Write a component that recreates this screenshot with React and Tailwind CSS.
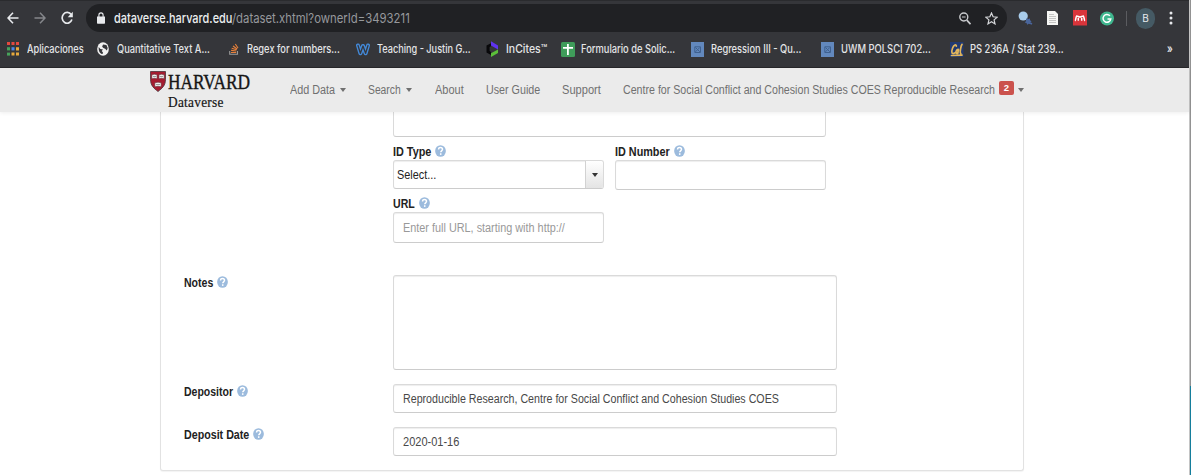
import React, { useLayoutEffect, useRef, useState } from "react";

// Text that is squeezed horizontally to fill exactly `w` pixels.
function Fit({ w, className = "", children }) {
  const ref = useRef(null);
  const [scale, setScale] = useState(1);
  useLayoutEffect(() => {
    setScale(w / ref.current.offsetWidth);
  }, [w]);
  return (
    <span className="flex shrink-0 items-center" style={{ width: w }}>
      <span
        ref={ref}
        className={"block shrink-0 origin-left whitespace-nowrap " + className}
        style={{ transform: `scaleX(${scale})` }}
      >
        {children}
      </span>
    </span>
  );
}

const Caret = ({ className = "" }) => (
  <svg className={"h-[4px] w-[6px] shrink-0 " + className} viewBox="0 0 6 4" fill="currentColor">
    <path d="M0 0h6L3 4z" />
  </svg>
);

const Help = () => (
  <svg className="relative -top-px ml-1 h-3 w-[11px] shrink-0" viewBox="0 0 16 16" preserveAspectRatio="none">
    <circle cx="8" cy="8" r="7.8" fill="#9cbbdd" />
    <path d="M5.2 6C5.2 4 6.3 3.3 8 3.3s2.9.8 2.9 2.4c0 2-2.5 2-2.5 3.9" fill="none" stroke="#fff" strokeWidth="2.2" />
    <path d="M7.2 11h2.2v2.2H7.2z" fill="#fff" />
  </svg>
);

const Label = ({ w, children }) => (
  <div className="flex h-4 items-center">
    <Fit w={w} className="text-[12px] leading-4 font-bold text-[#222]">{children}</Fit>
    <Help />
  </div>
);

const Box = ({ className = "", children }) => (
  <div className={"flex items-center rounded-[3px] border border-[#dadada] border-b-[#cccccc] bg-white shadow-[inset_0_1px_1px_rgba(0,0,0,0.07)] " + className}>
    {children}
  </div>
);

const Globe = () => (
  <svg className="h-[14px] w-3" viewBox="0 0 14 14" preserveAspectRatio="none">
    <circle cx="7" cy="7" r="6.8" fill="#f1f1f1" />
    <path d="M2 5l2 2 3 .5L5.5 9 7 10.5 6.5 12C4 12 1.5 9.5 2 5zM7 2.5l4 .5 1.5 3-1 2.5-2-1.7L7.5 6 6 4.8z" fill="#35363a" />
  </svg>
);

const Stack = () => (
  <svg className="h-3 w-[10px]" viewBox="0 0 10 12" fill="none">
    <path d="M.7 8v3.3h7.8V8" stroke="#9a9a9a" strokeWidth="1.1" />
    <path d="M2 9.5h5.2M2.1 7.4l5.2.6M2.7 5.2l4.9 1.6M4 3l4.2 3M6.3 1l2.7 4" stroke="#e8803a" strokeWidth="1.1" />
  </svg>
);

const Weebly = () => (
  <svg className="h-[13px] w-[14px]" viewBox="0 0 14 13" fill="none" strokeLinejoin="round" strokeLinecap="round">
    <path d="M2 2.5l2.4 7.8L7 3l2.6 7.3L12 2.5" stroke="#4389d8" strokeWidth="4" />
    <path d="M2 2.5l2.4 7.8L7 3l2.6 7.3L12 2.5" stroke="#35363a" strokeWidth="1.3" />
  </svg>
);

const InCites = () => (
  <svg className="h-4 w-[13px]" viewBox="0 0 13 16">
    <path d="M5 2.2v3L3.6 6v4L5 11v3L.5 11.5v-7z" fill="#08080a" />
    <path d="M5 .3l7 4.2v4L5 4.5z" fill="#5f33f0" />
    <path d="M12 8.5v3.4L5 15.9v-3.6z" fill="#5bbf3a" />
  </svg>
);

const Sheet = () => (
  <svg className="h-[15px] w-[14px]" viewBox="0 0 14 15">
    <rect width="14" height="15" rx="1.5" fill="#3f9c5a" />
    <path d="M6.9 2v11M2 5.8h10" stroke="#fff" strokeWidth="1.8" />
  </svg>
);

const BlueDoc = () => (
  <svg className="h-[15px] w-[13px]" viewBox="0 0 13 15">
    <rect width="13" height="15" fill="#6288bd" />
    <path d="M3.8 4.8h5.7v5.7H3.8zM4.5 5.5l4.3 4.3M8.8 5.5L4.5 9.8" fill="none" stroke="#3f618f" strokeWidth="1" />
  </svg>
);

const Cal = () => (
  <svg className="h-[15px] w-[14px]" viewBox="0 0 14 15" fill="none" strokeLinecap="round">
    <path d="M0 0h13.500v15H0z" fill="#223a72" />
    <path d="M6.300 4.200C6.500 2 3.800 2.600 2.500 6.200 1 10.500 2 12.500 4.600 11M8.200 7.300c-2-.3-3 4-1.600 4.100 1.200 0 1.900-4 1.900-4l-.7 4M12 2.300c-1 1-2.500 8.500-1.200 9.200M1.500 13.500l10.500-.4" stroke="#e3b75c" strokeWidth="1.700" />
  </svg>
);

const Apps = () => (
  <svg className="h-[14px] w-3" viewBox="0 0 12 14">
    <path d="M0 0h3v3H0zM4.5 0h3v3h-3zM9 0h3v3H9z" fill="#e5493f" />
    <path d="M0 5.2h3v3.2H0z" fill="#47a35b" />
    <path d="M4.5 5.2h3v3.2h-3z" fill="#4a86e8" />
    <path d="M9 5.2h3v3.2H9zM4.5 10.6h3v3h-3zM9 10.6h3v3H9z" fill="#e7a93c" />
    <path d="M0 10.6h3v3H0z" fill="#47a35b" />
  </svg>
);

const Mark = ({ w, slot, icon, children }) => (
  <div className={"flex shrink-0 items-center " + slot}>
    <span className="flex w-5 shrink-0 items-center">{icon}</span>
    <Fit w={w} className="font-[Inter,sans-serif] text-[11.5px] leading-4 font-medium text-[#e4e5e7]">{children}</Fit>
  </div>
);

const Browser = () => (
  <header className="flex h-[68px] shrink-0 flex-col border-t border-b border-t-[#2a2b2e] border-b-[#27272a] bg-[#35363a]">
    <div className="mt-[3px] flex h-7 items-center pl-[7px]">
      <svg className="h-3 w-3" viewBox="0 0 12 12" fill="none" stroke="#e8eaed" strokeWidth="1.6"><path d="M11.5 6H1.2M6 .8L1 6l5 5.2" /></svg>
      <svg className="ml-[15px] h-3 w-3" viewBox="0 0 12 12" fill="none" stroke="#85878b" strokeWidth="1.5"><path d="M.5 6h10.3M6 .8L11 6l-5 5.2" /></svg>
      <svg className="ml-[15px] h-[14px] w-3" viewBox="0 0 12 14" fill="none"><path d="M10.2 3.6A5 5.4 0 1 0 10.9 8.6" stroke="#e8eaed" strokeWidth="1.7" /><path d="M11.8.7v5.5H6.7z" fill="#e8eaed" /></svg>
      <div className="ml-[13px] flex h-7 w-[921px] items-center rounded-full bg-[#202124] pr-[9px] pl-[11px]">
        <svg className="h-3 w-2" viewBox="0 0 8 12"><path d="M0 4.5h8V11a.7.7 0 0 1-.7.7H.7A.7.7 0 0 1 0 11z" fill="#e8eaed" /><path d="M1.9 5V3a2.1 2.1 0 0 1 4.2 0v2" fill="none" stroke="#e8eaed" strokeWidth="1.1" /></svg>
        <span className="ml-[9px] flex">
          <Fit w={118} className="font-[Inter,sans-serif] text-[13.5px] leading-5 font-medium text-[#eceef0]">dataverse.harvard.edu</Fit>
          <Fit w={178} className="font-[Inter,sans-serif] text-[13.5px] leading-5 text-[#96989c]">/dataset.xhtml?ownerId=3493211</Fit>
        </span>
        <svg className="ml-auto h-[13px] w-3" viewBox="0 0 12 13" fill="none" stroke="#c9cbce"><circle cx="4.8" cy="5" r="4" strokeWidth="1.4" /><path d="M3 5h3.6" strokeWidth="1" /><path d="M7.8 8.2l3.7 4" strokeWidth="1.7" /></svg>
        <svg className="ml-[14px] h-[13px] w-[13px]" viewBox="0 0 13 13" fill="none" stroke="#d5d7da" strokeWidth="1.2"><path d="M6.5 1l1.6 3.8 4.1.4-3.1 2.7.9 4-3.500-2.100L3 11.900l.9-4L.8 5.200l4.100-.4z" /></svg>
      </div>
      <svg className="ml-[11px] h-[15px] w-[15px]" viewBox="0 0 15 15"><circle cx="5.200" cy="5" r="4.600" fill="#a9cdec" /><path d="M8 8.500l1-1.500 1.300 1 1.700-.5v1.700l1.500 1-1.200 1 .2 2-1.800-.4-1.500 1-.7-1.700-1.800-.6 1.200-1.200z" fill="#4a669c" /><path d="M12 12l2 1" stroke="#4a669c" strokeWidth="1.400" /></svg>
      <svg className="ml-[14px] h-[14px] w-[11px]" viewBox="0 0 11 14"><path d="M0 0h8l3 3v11H0z" fill="#f6f6f4" /><path d="M2 3.500h5M2 5.500h7M2 7.500h7M2 9.500h7M2 11.500h7" stroke="#b9b9b7" strokeWidth=".8" /></svg>
      <svg className="ml-[15px] h-4 w-[14px]" viewBox="0 0 14 16"><rect width="14" height="15.500" fill="#d9353b" /><path d="M2 10.800c1-.5.6-3.500 1.700-4.800 1.200 0 1.800 1 3.300 1s2.100-1 3.300-1c1.100 1.300.7 4.300 1.700 4.800M5.300 10.800V8M8.700 10.800V8" fill="none" stroke="#fff" strokeWidth="1.500" /></svg>
      <svg className="ml-[13px] h-[15px] w-[14px]" viewBox="0 0 14 15" preserveAspectRatio="none"><circle cx="7" cy="7.500" r="7" fill="#3fb68e" /><path d="M9.900 4.800A3.900 3.900 0 1 0 10.800 8H7.500" fill="none" stroke="#fff" strokeWidth="1.500" /></svg>
      <span className="ml-3 h-[15px] w-px bg-[#5b5c60]" />
      <span className="ml-[9px] flex h-[21px] w-[19px] items-center justify-center rounded-full bg-[#455a64] font-[Inter,sans-serif] text-[10px] text-[#e8eaed]">B</span>
      <svg className="ml-[14px] h-[14px] w-[4px]" viewBox="0 0 4 14" fill="#e8eaed"><circle cx="2" cy="2" r="1.500" /><circle cx="2" cy="7" r="1.500" /><circle cx="2" cy="12" r="1.500" /></svg>
    </div>
    <div className="mt-[7px] flex h-5 items-center pl-[7px]">
      <Mark slot="w-[90px]" w={57} icon={<Apps />}>Aplicaciones</Mark>
      <Mark slot="w-[130px]" w={93} icon={<Globe />}>Quantitative Text A...</Mark>
      <Mark slot="w-[130px]" w={93} icon={<span className="ml-[2px]"><Stack /></span>}>Regex for numbers...</Mark>
      <Mark slot="w-[129px]" w={94} icon={<span className="-ml-px"><Weebly /></span>}>Teaching - Justin G...</Mark>
      <Mark slot="w-[75px]" w={41} icon={<span><InCites /></span>}>InCites™</Mark>
      <Mark slot="w-[130px]" w={94} icon={<Sheet />}>Formulario de Solic...</Mark>
      <Mark slot="w-[130px]" w={90} icon={<BlueDoc />}>Regression III - Qu...</Mark>
      <Mark slot="w-[129px]" w={90} icon={<BlueDoc />}>UWM POLSCI 702...</Mark>
      <Mark slot="w-[217px]" w={94} icon={<Cal />}>PS 236A / Stat 239...</Mark>
      <Fit w={6} className="font-[Inter,sans-serif] text-[12px] leading-4 font-semibold text-[#e4e5e7]">»</Fit>
    </div>
  </header>
);

const Shield = () => (
  <svg className="h-[21px] w-4" viewBox="0 0 16 21">
    <path d="M.5.5h15v8c0 6-3.500 9-7.500 12-4-3-7.500-6-7.500-12z" fill="#a51c30" stroke="#49343a" strokeWidth=".8" />
    <path d="M1.800 3.800l2.600-.6 2.700.6v4l-2.700-.6-2.600.6zM8.900 3.800l2.700-.6 2.600.6v4l-2.600-.6-2.700.6zM4.800 11.800l3.200-.6 3.200.6v4L8 15.200l-3.200.6z" fill="#eee" stroke="#55252c" strokeWidth=".5" />
    <path d="M3 5.500h3.300M9.700 5.500H13M6 13.500h4" stroke="#777" strokeWidth=".7" />
  </svg>
);

const NavText = ({ w, slot, caret, children }) => (
  <span className={"flex shrink-0 items-center " + slot}>
    <Fit w={w} className="text-[12.500px] leading-4">{children}</Fit>
    {caret && <Caret className="ml-[5px]" />}
  </span>
);

const SiteNav = () => (
  <nav className="z-10 flex h-11 shrink-0 bg-[#ebebeb] pl-[150px] text-[#707070] shadow-[0_1px_4px_rgba(0,0,0,0.07)]">
    <div className="flex w-[141px] shrink-0">
      <div className="mt-[3px]"><Shield /></div>
      <div className="ml-[2px] flex flex-col pt-1 font-['Liberation_Serif',serif] text-[#151515]">
        <Fit w={82} className="text-[20.500px] leading-5 [-webkit-text-stroke:0.4px_#151515]">HARVARD</Fit>
        <Fit w={56} className="text-[14.500px] leading-5 tracking-[0.3px] [-webkit-text-stroke:0.2px_#151515]">Dataverse</Fit>
      </div>
    </div>
    <div className="-ml-px flex items-center">
      <NavText slot="w-[78px]" w={45} caret>Add Data</NavText>
      <NavText slot="w-[67px]" w={33} caret>Search</NavText>
      <NavText slot="w-[51px]" w={29}>About</NavText>
      <NavText slot="w-[76px]" w={54}>User Guide</NavText>
      <NavText slot="w-[61px]" w={39}>Support</NavText>
      <NavText slot="w-[372px]" w={372}>Centre for Social Conflict and Cohesion Studies COES Reproducible Research</NavText>
      <span className="mb-1 ml-1 flex h-[14px] w-[15px] items-center justify-center rounded-[2px] bg-[#cb524d] text-[9.500px] font-bold text-white">2</span>
      <Caret className="ml-1" />
    </div>
  </nav>
);

const FormPanel = () => (
  <section className="ml-[160px] flex h-[359px] w-[864px] shrink-0 flex-col rounded-b-[3px] border-x border-b border-[#e2e2e2] bg-white pl-[23px] shadow-[0_1px_1px_rgba(0,0,0,0.05)]">
    <div className="ml-[209px] flex h-[163px] w-[444px] flex-col">
      <Box className="h-[25px] w-[433px] shrink-0 rounded-t-none border-t-0 shadow-none" />
      <div className="mt-[7px] flex">
        <div className="w-[222px]">
          <Label w={38}>ID Type</Label>
          <Box className="h-[29px] w-[211px] overflow-hidden pl-[3px]">
            <Fit w={39} className="text-[12px] leading-4 text-[#222]">Select...</Fit>
            <span className="ml-auto flex h-full w-[18px] items-center justify-center border-l border-[#d2d2d2] bg-linear-to-b from-white to-[#e4e4e4] text-[#333]"><Caret /></span>
          </Box>
        </div>
        <div>
          <Label w={55}>ID Number</Label>
          <Box className="h-[30px] w-[211px]" />
        </div>
      </div>
      <div className="mt-[6px]">
        <Label w={22}>URL</Label>
        <Box className="h-[31px] w-[211px] pl-[9px]">
          <Fit w={162} className="text-[12px] leading-4 text-[#999]">Enter full URL, starting with http://</Fit>
        </Box>
      </div>
    </div>
    <div className="flex">
      <div className="w-[209px]"><Label w={29}>Notes</Label></div>
      <Box className="h-[95px] w-[444px]" />
    </div>
    <div className="mt-[14px] flex">
      <div className="w-[209px]"><Label w={49}>Depositor</Label></div>
      <Box className="h-[29px] w-[444px] pl-[9px]">
        <Fit w={376} className="text-[12px] leading-4 text-[#484848]">Reproducible Research, Centre for Social Conflict and Cohesion Studies COES</Fit>
      </Box>
    </div>
    <div className="mt-[14px] flex">
      <div className="w-[209px]"><Label w={65}>Deposit Date</Label></div>
      <Box className="h-[29px] w-[444px] pl-[9px]">
        <Fit w={56} className="text-[12px] leading-4 text-[#484848]">2020-01-16</Fit>
      </Box>
    </div>
  </section>
);

export default function App() {
  return (
    <div className="flex h-[475px] w-[1191px] overflow-hidden bg-white font-['Liberation_Sans',Arial,sans-serif]">
      <div className="flex w-[1189px] shrink-0 flex-col">
        <Browser />
        <SiteNav />
        <FormPanel />
      </div>
      <div className="flex w-[2px] shrink-0 flex-col border-l border-[#c4c4c4]">
        <span className="h-[386px] bg-[#929292]" />
        <span className="flex-1 bg-[#147e9c]" />
      </div>
    </div>
  );
}
